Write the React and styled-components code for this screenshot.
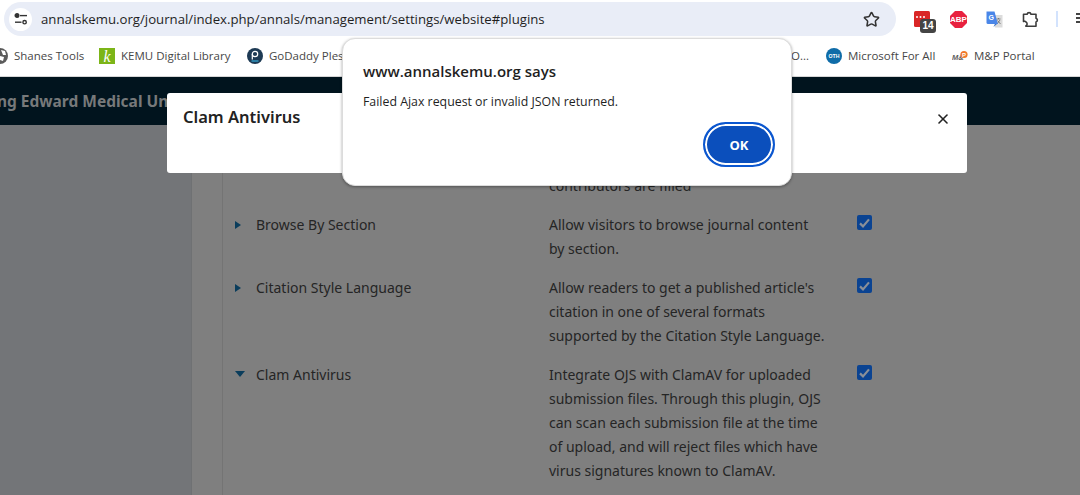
import React from 'react';
import styled, { createGlobalStyle } from 'styled-components';
import { Star, X } from 'lucide-react';

const GlobalStyle = createGlobalStyle`
  html, body {
    margin: 0;
    padding: 0;
    height: 100%;
    overflow: hidden;
    background: #7f7f7f;
  }
  * { box-sizing: border-box; }
`;

const Page = styled.div`
  position: relative;
  width: 1080px;
  height: 495px;
  overflow: hidden;
  display: flex;
  flex-direction: column;
  font-family: 'Open Sans', 'Noto Sans', sans-serif;
`;

const Toolbar = styled.div`
  height: 36px;
  flex: none;
  background: #fff;
  display: flex;
  align-items: flex-start;
  padding: 2px 0 0 4px;
`;

const Omnibox = styled.div`
  width: 892px;
  height: 34px;
  flex: none;
  border-radius: 17px;
  background: #e9edf7;
  display: flex;
  align-items: center;
  padding: 0 16px 0 5px;
`;

const SiteInfo = styled.span`
  width: 23px;
  height: 23px;
  border-radius: 50%;
  background: #fff;
  display: flex;
  align-items: center;
  justify-content: center;
  flex: none;
`;

const Url = styled.span`
  flex: 1;
  margin-left: 9px;
  font: 13.2px 'Open Sans', sans-serif;
  color: #1f1f1f;
  white-space: nowrap;
`;

const Extensions = styled.div`
  flex: 1;
  display: flex;
  align-items: center;
  height: 34px;
  padding-left: 18px;
`;

const ExtSlot = styled.span`
  position: relative;
  width: ${(p) => p.$w}px;
  display: flex;
  flex: none;
`;

const Badge = styled.span`
  position: absolute;
  left: 6px;
  top: 8px;
  width: 16px;
  height: 14px;
  border-radius: 3px;
  background: #444;
  color: #fff;
  font: 700 10px/14px 'Liberation Sans', sans-serif;
  text-align: center;
`;

const ToolbarDivider = styled.span`
  width: 2px;
  height: 16px;
  background: #d3e3fd;
  margin-left: 16px;
  flex: none;
`;

const MenuDots = styled.span`
  width: 4px;
  height: 2px;
  margin: 0 0 10px 18px;
  flex: none;
  background: #444;
  box-shadow: 0 4px 0 #444, 0 8px 0 #444;
`;

const BookmarkBar = styled.div`
  height: 41px;
  flex: none;
  background: #fff;
  border-bottom: 1px solid #d6d6d6;
  display: flex;
  align-items: center;
  padding-bottom: 1px;
  margin-left: -8px;
`;

const Bookmark = styled.span`
  display: flex;
  align-items: center;
  gap: 6px;
  flex: none;
  width: ${(p) => p.$w}px;
  font: 11.5px 'Open Sans', sans-serif;
  color: #474747;
  white-space: nowrap;
`;

const Header = styled.div`
  height: 48px;
  flex: none;
  background: #01141e;
  overflow: hidden;
  display: flex;
  align-items: center;
`;

const HeaderTitle = styled.span`
  margin-left: -18px;
  padding-bottom: 1px;
  font: 700 15.5px 'Noto Sans', sans-serif;
  color: #77797a;
  white-space: nowrap;
`;

const Body = styled.div`
  flex: 1;
  display: flex;
  background: #7f7f7f;
  min-height: 0;
`;

const Sidebar = styled.div`
  width: 192px;
  flex: none;
  background: #737578;
  border-right: 1px solid #6f7173;
`;

const Gutter = styled.div`
  width: 31px;
  flex: none;
  border-right: 1px solid #747474;
`;

const PluginList = styled.div`
  flex: 1;
  padding-top: 49px;
`;

const PluginRow = styled.div`
  display: grid;
  grid-template-columns: 33px 293px 277px 31px 20px;
  padding-bottom: 15px;
  font: 14px/24px 'Noto Sans', sans-serif;
  color: #1e1e1e;
`;

const Caret = styled.span`
  display: block;
  width: 0;
  height: 0;
  margin: 8px 0 0 12px;
  border-style: solid;
  border-color: transparent;
  ${(p) =>
    p.$open
      ? 'border-width: 6px 5px 0 5px; border-top-color: #0a3d5c;'
      : 'border-width: 4px 0 4px 6px; border-left-color: #0a3d5c;'}
`;

const PluginName = styled.span`
  color: #252525;
`;

const PluginDesc = styled.span`
  color: #252525;
`;

const CheckBox = styled.span`
  grid-column: 5;
  width: 15px;
  height: 15px;
  margin-top: 2px;
  border-radius: 2px;
  background: #0a4392;
  display: flex;
  align-items: center;
  justify-content: center;
`;

const ModalCard = styled.div`
  position: absolute;
  left: 167px;
  top: 93px;
  width: 800px;
  height: 80px;
  background: #fff;
  border-radius: 3px;
  display: flex;
  justify-content: space-between;
  padding: 13px 16px 0 16px;
`;

const ModalTitle = styled.span`
  font: 600 16.5px/22px 'Noto Sans', sans-serif;
  color: #222;
`;

const CloseButton = styled.span`
  display: flex;
  margin-top: 5px;
  color: #222;
`;

const AlertDialog = styled.div`
  position: absolute;
  left: 342px;
  top: 38px;
  width: 450px;
  height: 148px;
  background: #fff;
  border-radius: 13px;
  border: 1px solid #dcdcdc;
  box-shadow: 0 1px 3px rgba(0, 0, 0, 0.35);
  padding: 22px 16px 0 20px;
  display: flex;
  flex-direction: column;
`;

const AlertTitle = styled.div`
  font: 600 15px/20px 'Open Sans', sans-serif;
  color: #1f1f1f;
`;

const AlertText = styled.div`
  margin-top: 12px;
  font: 12.35px/18px 'Open Sans', sans-serif;
  color: #1f1f1f;
`;

const AlertActions = styled.div`
  display: flex;
  justify-content: flex-end;
  margin-top: 11px;
`;

const OkButton = styled.button`
  width: 72px;
  height: 45px;
  border-radius: 23px;
  border: 2px solid #0b57d0;
  padding: 0;
  background: #0b4fbc;
  box-shadow: inset 0 0 0 2px #fff;
  color: #fff;
  font: 700 13px 'Open Sans', sans-serif;
`;

const Tune = () => (
  <svg width="14" height="12" viewBox="0 0 14 12" fill="none" stroke="#333" strokeWidth="1.4">
    <circle cx="3" cy="2.6" r="1.8" fill="#333" />
    <path d="M6 2.6h7" />
    <path d="M1 9.2h6.5" />
    <circle cx="10.6" cy="9.2" r="1.7" />
  </svg>
);

const CalendarExt = () => (
  <svg width="16" height="16" viewBox="0 0 16 16">
    <rect width="16" height="16" rx="1.5" fill="#d92626" />
    <circle cx="3" cy="6" r="1" fill="#fff" />
    <circle cx="6.5" cy="6" r="1" fill="#fff" />
    <circle cx="10" cy="6" r="1" fill="#fff" />
  </svg>
);

const AbpIcon = () => (
  <svg width="17" height="17" viewBox="0 0 17 17">
    <path d="M5 0h7l5 5v7l-5 5H5l-5-5V5z" fill="#e8213f" />
    <text x="8.5" y="11.4" textAnchor="middle" fill="#fff" fontSize="8" fontWeight="700" fontFamily="Liberation Sans, sans-serif">ABP</text>
  </svg>
);

const TranslateIcon = () => (
  <svg width="17" height="17" viewBox="0 0 17 17">
    <path d="M7 4h9.5v12.5H9z" fill="#dcdcdc" />
    <path d="M10.5 8h4M12.5 7v1M11 13l3-4M11.5 9.5l3 3.5" stroke="#6b6b6b" strokeWidth="0.8" fill="none" />
    <path d="M0.5 0.5h8l3.4 12.5H2a1.5 1.5 0 0 1-1.5-1.5z" fill="#4a86e8" />
    <path d="M9 13l-1.6 3 3.6-3z" fill="#3b6fc4" />
    <text x="5.2" y="9" textAnchor="middle" fill="#fff" fontSize="7" fontWeight="700" fontFamily="Liberation Sans, sans-serif">G</text>
  </svg>
);

const PuzzleIcon = () => (
  <svg width="18" height="18" viewBox="0 0 18 18" fill="none" stroke="#3c3c3c" strokeWidth="1.6" strokeLinejoin="round">
    <path d="M1.5 4.2h3.6a2 2 0 0 1 3.9 0h5v4a2 2 0 0 1 0 3.8v4.3H4l-.2-.4a2.2 2.2 0 0 0 .4-3.8 2.4 2.4 0 0 0-2.7-.6z" />
  </svg>
);

const GlobeFavicon = () => (
  <svg width="16" height="16" viewBox="0 0 16 16">
    <circle cx="8" cy="8" r="8" fill="#5b5b5b" />
    <path d="M9 2l4 1 1 4-3 0zM8 8l4 1-1 4-3-1z" fill="#fff" />
  </svg>
);

const KemuFavicon = () => (
  <svg width="16" height="16" viewBox="0 0 16 16">
    <rect width="16" height="16" fill="#7cb518" />
    <text x="8" y="13.5" textAnchor="middle" fill="#fff" fontSize="16" fontStyle="italic" fontFamily="Liberation Serif, serif">k</text>
  </svg>
);

const PFavicon = () => (
  <svg width="16" height="16" viewBox="0 0 16 16">
    <circle cx="8" cy="8" r="8" fill="#1d3a54" />
    <circle cx="8" cy="6" r="2.7" fill="none" stroke="#fff" strokeWidth="1.2" />
    <path d="M5.3 6v5.5" stroke="#fff" strokeWidth="1.2" />
    <path d="M4.5 13h7" stroke="#37b6e6" strokeWidth="1.1" />
  </svg>
);

const OthFavicon = () => (
  <svg width="16" height="16" viewBox="0 0 16 16">
    <circle cx="8" cy="8" r="8" fill="#0f6ca8" />
    <text x="8" y="10" textAnchor="middle" fill="#fff" fontSize="5.2" fontWeight="700" fontFamily="Liberation Sans, sans-serif">OTH</text>
  </svg>
);

const MpFavicon = () => (
  <svg width="16" height="12" viewBox="0 0 16 12">
    <text x="0" y="9.5" fill="#5e5e5e" fontSize="7.5" fontWeight="700" fontStyle="italic" fontFamily="Liberation Sans, sans-serif">M&amp;</text>
    <circle cx="12" cy="4.5" r="3.6" fill="#f0782a" />
    <text x="12" y="7" textAnchor="middle" fill="#fff" fontSize="6" fontWeight="700" fontFamily="Liberation Sans, sans-serif">P</text>
  </svg>
);

const Check = () => (
  <svg width="11" height="10" viewBox="0 0 11 10" fill="none" stroke="#8a8f98" strokeWidth="2.2">
    <path d="M1 5.4l3 3L10 1.4" />
  </svg>
);

const plugins = [
  {
    name: 'Browse By Section',
    desc: 'Allow visitors to browse journal content by section.'
  },
  {
    name: 'Citation Style Language',
    desc: "Allow readers to get a published article's citation in one of several formats supported by the Citation Style Language."
  },
  {
    name: 'Clam Antivirus',
    open: true,
    desc: 'Integrate OJS with ClamAV for uploaded submission files. Through this plugin, OJS can scan each submission file at the time of upload, and will reject files which have virus signatures known to ClamAV.'
  }
];

const App = () => (
  <Page>
    <GlobalStyle />
    <Toolbar>
      <Omnibox>
        <SiteInfo><Tune /></SiteInfo>
        <Url>annalskemu.org/journal/index.php/annals/management/settings/website#plugins</Url>
        <Star size={17} color="#333" strokeWidth={2.2} />
      </Omnibox>
      <Extensions>
        <ExtSlot $w={36}>
          <CalendarExt />
          <Badge>14</Badge>
        </ExtSlot>
        <ExtSlot $w={36}><AbpIcon /></ExtSlot>
        <ExtSlot $w={36}><TranslateIcon /></ExtSlot>
        <ExtSlot $w={18}><PuzzleIcon /></ExtSlot>
        <ToolbarDivider />
        <MenuDots />
      </Extensions>
    </Toolbar>
    <BookmarkBar>
      <Bookmark $w={107}><GlobeFavicon />Shanes Tools</Bookmark>
      <Bookmark $w={148}><KemuFavicon />KEMU Digital Library</Bookmark>
      <Bookmark $w={544}><PFavicon />GoDaddy Plesk</Bookmark>
      <Bookmark $w={35}>O...</Bookmark>
      <Bookmark $w={126}><OthFavicon />Microsoft For All</Bookmark>
      <Bookmark $w={100}><MpFavicon />M&amp;P Portal</Bookmark>
    </BookmarkBar>
    <Header>
      <HeaderTitle>King Edward Medical University</HeaderTitle>
    </Header>
    <Body>
      <Sidebar />
      <Gutter />
      <PluginList>
        <PluginRow>
          <span />
          <span />
          <PluginDesc>contributors are filled</PluginDesc>
        </PluginRow>
        {plugins.map((plugin) => (
          <PluginRow key={plugin.name}>
            <Caret $open={plugin.open} />
            <PluginName>{plugin.name}</PluginName>
            <PluginDesc>{plugin.desc}</PluginDesc>
            <CheckBox><Check /></CheckBox>
          </PluginRow>
        ))}
      </PluginList>
    </Body>
    <ModalCard>
      <ModalTitle>Clam Antivirus</ModalTitle>
      <CloseButton><X size={16} strokeWidth={2.4} /></CloseButton>
    </ModalCard>
    <AlertDialog>
      <AlertTitle>www.annalskemu.org says</AlertTitle>
      <AlertText>Failed Ajax request or invalid JSON returned.</AlertText>
      <AlertActions>
        <OkButton>OK</OkButton>
      </AlertActions>
    </AlertDialog>
  </Page>
);

export default App;
